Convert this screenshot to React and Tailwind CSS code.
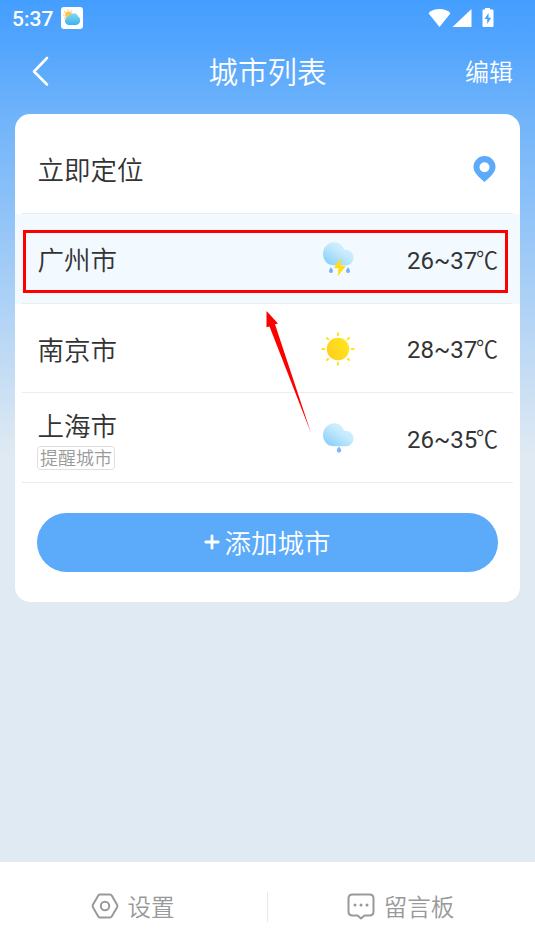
import React from 'react';

const WEATHER = { storm: StormIcon, sun: SunIcon, rain: RainIcon };

function Cloud() {
  return (
    <>
      <defs>
        <linearGradient id="cloud" x1="1" y1="0" x2="0.1" y2="1">
          <stop offset="0" stopColor="#dff4ff" />
          <stop offset="0.45" stopColor="#c4eafd" />
          <stop offset="1" stopColor="#86cdfb" />
        </linearGradient>
      </defs>
      <path fill="url(#cloud)" d="M13 1.300c5 0 8.700 2.800 10.300 7.800q1.400-.3 2.700 0c3.700.5 6.500 3.400 6.500 7.400 0 4.300-3.300 7.800-8 7.800H13C6.500 24.300 2 19.300 2 13 2 6.800 7 1.300 13 1.300z" />
    </>
  );
}

function StormIcon() {
  return (
    <svg width="34" height="38" viewBox="0 0 34 38" className="mt-[3px] block">
      <Cloud />
      <path fill="#76b0f8" d="M10 26.300c1 1.500 2 2.600 2 3.800a2 2 0 0 1-4 0c0-1.200 1-2.300 2-3.800zM27 26.300c1 1.500 2 2.600 2 3.800a2 2 0 0 1-4 0c0-1.200 1-2.300 2-3.800z" />
      <path fill="#ffdf14" d="M19.800 16.500 12.800 27.300h4.600l-.6 8 8.200-10.500h-5.200z" />
    </svg>
  );
}

function RainIcon() {
  return (
    <svg width="34" height="38" viewBox="0 0 34 38" className="mt-[7px] block">
      <Cloud />
      <path fill="#84b4fa" d="M18 24.500c1 1.500 2.200 2.300 2.200 3.900a2.200 2.200 0 0 1-4.400 0c0-1.600 1.200-2.400 2.200-3.900z" />
    </svg>
  );
}

function SunIcon() {
  return (
    <svg width="34" height="38" viewBox="0 0 34 38" className="mt-0.5 block">
      <defs>
        <linearGradient id="sun" x1="1" y1="0.2" x2="0" y2="0.7">
          <stop offset="0" stopColor="#ffe81c" />
          <stop offset="1" stopColor="#ffcd20" />
        </linearGradient>
      </defs>
      <circle cx="17" cy="19" r="11.200" fill="url(#sun)" />
      <g stroke="#ffe41c" strokeWidth="2" strokeLinecap="round">
        <path d="M17 3.300v2M17 32.700v2M1.300 19h2M30.700 19h2M6 8l1.200 1.200M26.800 28.800 28 30M28 8l-1.200 1.200M7.200 28.800 6 30" />
      </g>
    </svg>
  );
}

function AppBadge() {
  return (
    <svg width="22" height="22" viewBox="0 0 22 22" className="ml-2">
      <defs>
        <linearGradient id="badge" x1="0" y1="0" x2="0" y2="1">
          <stop offset="0" stopColor="#7ddcf3" />
          <stop offset="1" stopColor="#42b0ee" />
        </linearGradient>
      </defs>
      <rect width="22" height="22" rx="3" fill="#fff" />
      <circle cx="7.500" cy="7.800" r="3.300" fill="#ffc14a" />
      <path d="M7 2.800v.8M3.500 4.500l.7.700M10.800 4l-.6.700M2.300 8h.8M3.500 11l.5-.4" stroke="#ffc876" strokeWidth="1.200" strokeLinecap="round" />
      <path fill="url(#badge)" d="M8 9.300c1-1.800 2.700-3 4.700-3 2.400 0 4 1.400 4.600 3.500 1.300.9 1.900 2 1.900 3.500 0 2.500-1.700 4.700-4.200 4.700H8.200C5.500 18 4 16.100 4 13.700c0-2.500 1.700-4.100 4-4.400z" />
    </svg>
  );
}

function StatusBar() {
  return (
    <div className="flex h-9 items-center pl-3 pr-[41px] text-white">
      <span className="pt-0.5 font-[Roboto] text-[21px] font-medium leading-none">5:37</span>
      <AppBadge />
      <svg width="66" height="20" viewBox="0 0 66 20" fill="#fff" className="-mt-px ml-auto">
        <path d="M0.500 5.300C3.200 2.300 7.200 1 11.500 1s8.300 1.300 11 4.300L11.500 19z" />
        <path d="M43.500 1v18h-19z" />
        <path fillRule="evenodd" d="M57 0h5v1.500h2.500q1 0 1 1v15.500q0 1-1 1h-9q-1 0-1-1V2.500q0-1 1-1H57zM60.500 5l-4 6h2.700v5l4-6.300h-2.700z" />
      </svg>
    </div>
  );
}

function CityRow({ name, tag, weather, range, className }) {
  const Icon = WEATHER[weather];
  return (
    <div className={`flex flex-col px-[7px] ${className}`}>
      <div className="flex flex-1 items-center border-b border-[#ebecee] pl-[15px]">
        <div className="w-[284px] pt-[5px]">
          <div className="pl-[0.500px] text-[26.500px] leading-[32px]">{name}</div>
          {tag && (
            <div className="mt-[3px] flex h-6 w-[78px] items-center justify-center rounded-[4px] border border-[#dedede] pt-0.5 text-[18px] leading-none text-[#999]">
              {tag}
            </div>
          )}
        </div>
        <Icon />
        <div className="ml-[52px] whitespace-nowrap pt-1 text-[24px] font-normal leading-[32px]">
          {range}
          <span className="-ml-px inline-block origin-left scale-x-[0.92] font-[350] leading-none">℃</span>
        </div>
      </div>
    </div>
  );
}

export default function App() {
  return (
    <div className="relative flex h-[951px] w-[535px] flex-col overflow-hidden bg-[#e0eaf2] bg-[linear-gradient(180deg,#449eff_0px,#54a6fd_50px,#6fb3fa_114px,#e0eaf2_455px)] font-[Roboto,'Noto_Sans_CJK_SC',sans-serif] font-[350] text-[#333]">
      <StatusBar />
      <header className="grid h-[78px] grid-cols-3 items-start pl-[31px] pr-[22px] pt-[15px] text-white">
        <svg width="19" height="32" viewBox="0 0 19 32" fill="none" stroke="#fff" strokeWidth="2.600" strokeLinecap="round" strokeLinejoin="round" className="mt-1">
          <path d="M16 3 3 16.500 16 29.500" />
        </svg>
        <h1 className="-ml-[9px] whitespace-nowrap pt-0.5 text-center text-[29.500px] font-[350] leading-[40px]">城市列表</h1>
        <span className="pt-0.5 text-right text-[24px] leading-[40px]">编辑</span>
      </header>

      <main className="mx-[15px] flex h-[488px] flex-col overflow-hidden rounded-[15px] bg-white">
        <div className="h-[100px] px-[7px]">
          <div className="flex h-full items-center justify-between border-b border-[#ebecee] pl-[15.500px] pr-[17px] pt-3">
            <span className="pt-[3px] text-[26.500px] leading-[32px]">立即定位</span>
            <svg width="23" height="26" viewBox="0 0 22 26" className="-mt-0.5">
              <path fill="#5babfa" fillRule="evenodd" d="M11 0a11 11 0 0 1 11 11c0 5-4.500 9.500-11 15C4.500 20.500 0 16 0 11A11 11 0 0 1 11 0zm0 6.200a5 5 0 1 0 0 10 5 5 0 0 0 0-10z" />
            </svg>
          </div>
        </div>
        <CityRow name="广州市" weather="storm" range="26~37" className="h-[90px] bg-[#f2f9ff]" />
        <CityRow name="南京市" weather="sun" range="28~37" className="h-[89px]" />
        <CityRow name="上海市" tag="提醒城市" weather="rain" range="26~35" className="h-[90px]" />
        <button className="mx-[22px] mt-[30px] flex h-[59px] items-center justify-center gap-[5px] rounded-full bg-[#5babfa] pr-px text-[26.500px] font-[350] leading-none text-white">
          <svg width="16" height="16" viewBox="0 0 16 16" stroke="#fff" strokeWidth="2.800" strokeLinecap="round" className="-mt-px">
            <path d="M8 1.800v12.400M1.800 8h12.400" />
          </svg>
          <span className="pt-[3px]">添加城市</span>
        </button>
      </main>

      <footer className="mt-auto flex h-[89px] items-center bg-white text-[23.500px] leading-none text-[#999]">
        <div className="flex flex-1 items-center justify-center gap-[9px] pr-0.5">
          <svg width="28" height="26" viewBox="0 0 28 26" fill="none" stroke="#999" strokeWidth="2" strokeLinejoin="round" className="-mt-0.5">
            <path d="M9 1.500h10c.8 0 1.300.3 1.700 1l5.400 9.200c.5.900.5 1.700 0 2.600l-5.400 9.200c-.4.700-.9 1-1.700 1H9c-.8 0-1.300-.3-1.700-1L1.900 14.300c-.5-.9-.5-1.700 0-2.600l5.400-9.200c.4-.7.900-1 1.700-1z" />
            <circle cx="14" cy="13" r="4.200" />
          </svg>
          <span className="pt-1">设置</span>
        </div>
        <div className="h-[30px] w-px bg-[#e8e8e8]" />
        <div className="flex flex-1 items-center justify-center gap-[9px] pr-0.5">
          <svg width="28" height="27" viewBox="0 0 28 27" fill="none" stroke="#999" strokeWidth="2" strokeLinejoin="round" className="-mt-px">
            <path d="M5.500 1.500h17c2.700 0 4 1.300 4 4v13c0 2.700-1.300 4-4 4h-5L14 25.500l-3.500-3h-5c-2.700 0-4-1.300-4-4v-13c0-2.700 1.300-4 4-4z" />
            <path d="M8 12h.01M14 12h.01M20 12h.01" strokeWidth="3" strokeLinecap="round" />
          </svg>
          <span className="pt-1">留言板</span>
        </div>
      </footer>

      <div className="absolute left-[23px] top-[230px] h-[63px] w-[485px] border-[3px] border-[#fe0000]" />
      <svg width="50" height="126" viewBox="0 0 50 126" className="absolute left-[264px] top-[309px]">
        <path fill="#fe0000" d="M2.500 2l11.500 12.500-3 .8L47 124 5.500 17.500l-3 .8z" />
      </svg>
    </div>
  );
}
